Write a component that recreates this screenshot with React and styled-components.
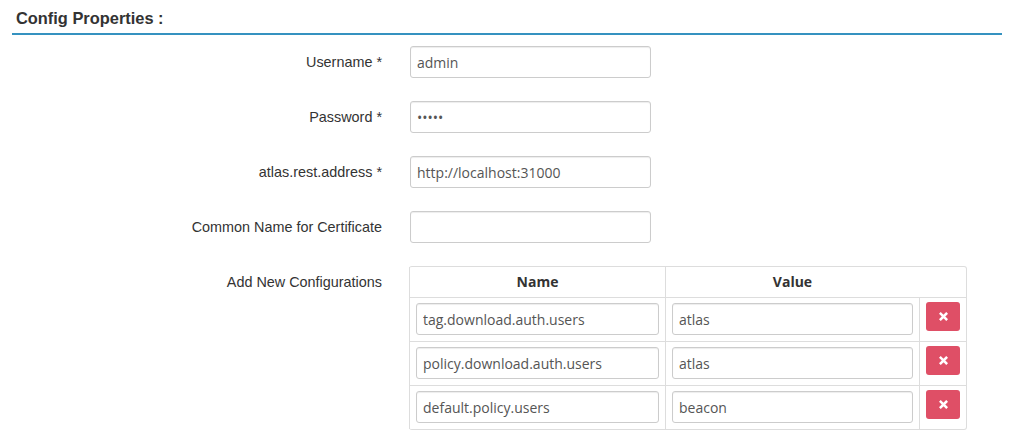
import React from "react";
import styled, { createGlobalStyle } from "styled-components";

const Global = createGlobalStyle`
  html, body { margin: 0; padding: 0; background: #fff; }
  body { font-family: "Liberation Sans", Arial, sans-serif; color: #333; }
  * { box-sizing: border-box; }
`;

const Page = styled.div`
  width: 1014px;
  padding: 0 12px;
`;

const Heading = styled.h3`
  margin: 0;
  padding: 8px 4px 5px;
  font: bold 16.4px/20px "Liberation Sans", Arial, sans-serif;
  color: #333;
  border-bottom: 2px solid #3592c0;
`;

const Form = styled.div`
  display: grid;
  grid-template-columns: 370px 557px;
  column-gap: 28px;
  row-gap: 23px;
  margin-top: 11px;
`;

const Label = styled.label`
  text-align: right;
  font-size: 14.4px;
  line-height: 32px;
  color: #333;
  align-self: start;
  white-space: nowrap;
`;

const Input = styled.input`
  display: block;
  width: ${(p) => (p.$full ? "100%" : "241px")};
  height: 32px;
  padding: 0 6px;
  border: 1px solid #ccc;
  border-radius: 3px;
  box-shadow: inset 0 1px 1px rgba(0, 0, 0, 0.075);
  font: 14px "Open Sans", sans-serif;
  color: #555;
  background: #fff;
  outline: none;
`;

const Table = styled.table`
  width: 558px;
  border-collapse: separate;
  border-spacing: 0;
  border: 1px solid #ddd;
  border-left: none;
  border-radius: 3px;
  table-layout: fixed;
  margin-left: -1px;
`;

const Th = styled.th`
  padding: 5px 6px;
  font: bold 14px/20px "Open Sans", sans-serif;
  color: #333;
  text-align: center;
  border-left: ${(p) => (p.$noBorder ? "none" : "1px solid #ddd")};
  border-bottom: 1px solid #ddd;
`;

const Td = styled.td`
  padding: 5px 6px 6px;
  vertical-align: top;
  border-left: 1px solid #ddd;
  border-top: ${(p) => (p.$first ? "none" : "1px solid #ddd")};
`;

const DeleteButton = styled.button`
  display: flex;
  align-items: center;
  justify-content: center;
  width: 34px;
  height: 29px;
  margin-top: -1px;
  padding: 0;
  border: none;
  border-radius: 3px;
  background: #df4f66;
  cursor: pointer;
`;

const XIcon = () => (
  <svg width="9" height="9" viewBox="0 0 9 9">
    <path d="M1.8 1.8 L7.2 7.2 M7.2 1.8 L1.8 7.2" stroke="#fff" strokeWidth="2.6" strokeLinecap="square" />
  </svg>
);

const fields = [
  { label: "Username *", value: "admin", type: "text" },
  { label: "Password *", value: "admin", type: "password" },
  { label: "atlas.rest.address *", value: "http://localhost:31000", type: "text" },
  { label: "Common Name for Certificate", value: "", type: "text" },
];

const configs = [
  { name: "tag.download.auth.users", value: "atlas" },
  { name: "policy.download.auth.users", value: "atlas" },
  { name: "default.policy.users", value: "beacon" },
];

export default function App() {
  return (
    <Page>
      <Global />
      <Heading>Config Properties :</Heading>
      <Form>
        {fields.map((f) => (
          <React.Fragment key={f.label}>
            <Label>{f.label}</Label>
            <div>
              <Input type={f.type} defaultValue={f.value} readOnly />
            </div>
          </React.Fragment>
        ))}
        <Label>Add New Configurations</Label>
        <Table>
          <colgroup>
            <col style={{ width: 256 }} />
            <col style={{ width: 254 }} />
            <col style={{ width: 47 }} />
          </colgroup>
          <thead>
            <tr>
              <Th>Name</Th>
              <Th>Value</Th>
              <Th $noBorder></Th>
            </tr>
          </thead>
          <tbody>
            {configs.map((c, i) => (
              <tr key={c.name}>
                <Td $first={i === 0}>
                  <Input $full defaultValue={c.name} readOnly />
                </Td>
                <Td $first={i === 0}>
                  <Input $full defaultValue={c.value} readOnly />
                </Td>
                <Td $first={i === 0}>
                  <DeleteButton aria-label="remove">
                    <XIcon />
                  </DeleteButton>
                </Td>
              </tr>
            ))}
          </tbody>
        </Table>
      </Form>
    </Page>
  );
}
